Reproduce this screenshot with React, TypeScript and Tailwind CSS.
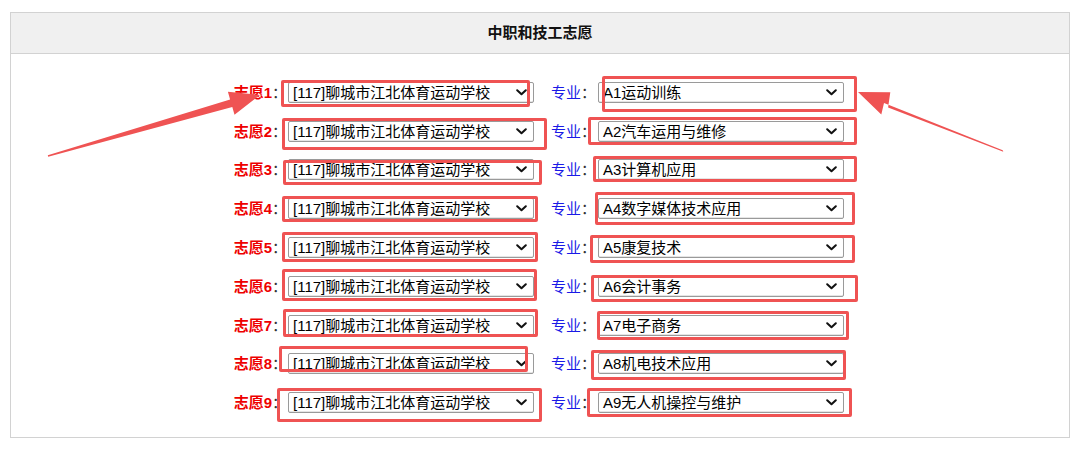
import React from "react";

const majors = [
  "A1运动训练",
  "A2汽车运用与维修",
  "A3计算机应用",
  "A4数字媒体技术应用",
  "A5康复技术",
  "A6会计事务",
  "A7电子商务",
  "A8机电技术应用",
  "A9无人机操控与维护",
];

const boxes: [number, number, number, number][] = [
  [281, 80, 530, 107],
  [282, 118, 547, 150],
  [283, 160, 542, 185],
  [282, 196, 538, 222],
  [282, 232, 538, 262],
  [282, 269, 537, 301],
  [283, 309, 538, 337],
  [279, 346, 528, 372],
  [277, 388, 542, 422],
  [602, 76, 857, 112],
  [588, 117, 857, 145],
  [593, 156, 857, 182],
  [595, 192, 855, 225],
  [590, 235, 855, 263],
  [591, 275, 858, 302],
  [597, 311, 849, 340],
  [591, 350, 846, 380],
  [587, 388, 852, 417],
];

function FakeSelect({ text }: { text: string }) {
  return (
    <div className="flex h-[21px] w-[246px] items-center justify-between rounded-[2px] border border-[#9a9a9a] bg-white pl-[4px] pr-[6px] text-[15px] leading-none text-black shadow-[inset_0_-1px_0_#e5e5e5]">
      <span className="whitespace-nowrap">{text}</span>
      <svg width="11" height="7" viewBox="0 0 11 7" className="shrink-0">
        <path d="M1.2 1.2 L5.5 5.3 L9.8 1.2" fill="none" stroke="#111" strokeWidth="2" strokeLinecap="round" strokeLinejoin="round" />
      </svg>
    </div>
  );
}

export default function App() {
  return (
    <div
      className="relative h-[469px] w-[1080px] overflow-hidden bg-white"
      style={{ fontFamily: '"Liberation Sans", "Noto Sans CJK SC", sans-serif' }}
    >
      <div className="ml-[10px] mt-[12px] flex h-[426px] w-[1060px] flex-col border border-[#d2d2d2]">
        <div className="flex h-[41px] items-center justify-center border-b border-[#d2d2d2] bg-[#f0f0f0] text-[15px] font-bold text-[#111]">
          中职和技工志愿
        </div>
        <div className="flex flex-col pl-[218px] pt-[19px]">
          {majors.map((m, i) => (
            <div key={i} className="flex h-[38.8px] items-center">
              <div className="w-[58px] whitespace-nowrap text-right text-[15px] leading-none">
                <span className="font-bold text-[#ee0000]">志愿{i + 1}</span>
                <span className="text-[#333]">：</span>
              </div>
              <div className="ml-[1px]">
                <FakeSelect text="[117]聊城市江北体育运动学校" />
              </div>
              <div className="ml-[17px] w-[45px] whitespace-nowrap text-[15px] leading-none">
                <span className="text-[#1a1ae6]">专业</span>
                <span className="text-[#333]">：</span>
              </div>
              <div className="ml-[2px]">
                <FakeSelect text={m} />
              </div>
            </div>
          ))}
        </div>
      </div>

      {boxes.map(([l, t, r, b], i) => (
        <div
          key={i}
          className="pointer-events-none absolute rounded-[2px] border-[3px] border-[#ef5353]"
          style={{ left: l, top: t, width: r - l, height: b - t }}
        />
      ))}

      <svg className="pointer-events-none absolute left-0 top-0" width="1080" height="469">
        <polygon
          fill="#ef5353"
          points="48.2,156.8 232.3,107.1 234.5,114.8 260,95 227.9,91.8 230.1,99.5 47.8,155.2"
        />
        <polygon
          fill="#ef5353"
          points="1003.3,151.8 888.1,107.4 890.3,92.2 858,92 881.3,114.4 884,103.1 1002.7,150.2"
        />
      </svg>
    </div>
  );
}
